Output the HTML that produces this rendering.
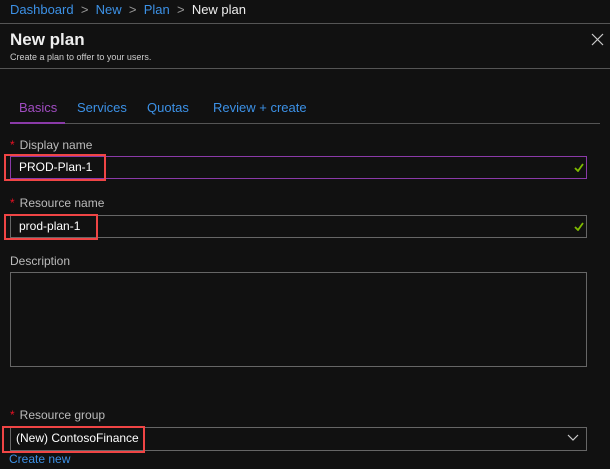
<!DOCTYPE html><html><head><style>
body{margin:0;width:610px;height:469px;background:#111;overflow:hidden;font-family:"Liberation Sans",sans-serif;position:relative;color:#ddd}
.a{position:absolute;white-space:nowrap}
.lbl{font-size:12px;color:#bbb}
.star{color:#e81123;margin-right:5px}
.in{position:absolute;left:10px;width:577px;border:1px solid #666;box-sizing:border-box;background:#111}
.red{position:absolute;border:2px solid #f04545;box-sizing:border-box}
</style></head><body>
<div class="a" style="left:10px;top:2px;font-size:13px;color:#3c91e6">Dashboard <span style="color:#999">&nbsp;&gt;&nbsp;</span> New <span style="color:#999">&nbsp;&gt;&nbsp;</span> Plan <span style="color:#999">&nbsp;&gt;&nbsp;</span> <span style="color:#eee">New plan</span></div>
<div class="a" style="left:0;top:23px;width:610px;height:1px;background:#555"></div>
<div class="a" style="left:10px;top:30px;font-size:17px;font-weight:bold;color:#eee">New plan</div>
<div class="a" style="left:10px;top:52px;font-size:9px;color:#ccc">Create a plan to offer to your users.</div>
<svg class="a" style="left:591px;top:33px" width="13" height="13"><path d="M1 1L12 12M12 1L1 12" stroke="#ccc" stroke-width="1.2"/></svg>
<div class="a" style="left:0;top:68px;width:610px;height:1px;background:#555"></div>
<div class="a" style="left:19px;top:100px;font-size:13px;color:#a04cc0">Basics</div>
<div class="a" style="left:77px;top:100px;font-size:13px;color:#3c91e6">Services</div>
<div class="a" style="left:147px;top:100px;font-size:13px;color:#3c91e6">Quotas</div>
<div class="a" style="left:213px;top:100px;font-size:13px;color:#3c91e6">Review + create</div>
<div class="a" style="left:10px;top:123px;width:590px;height:1px;background:#555"></div>
<div class="a" style="left:10px;top:122px;width:55px;height:2px;background:#8a3aa8"></div>
<div class="a lbl" style="left:10px;top:138px"><span class="star">*</span>Display name</div>
<div class="in" style="top:156px;height:23px;border-color:#8a3aa8"></div>
<svg class="a" style="left:574px;top:163px" width="10" height="9"><path d="M1 5L4 8L9 1" stroke="#7fba00" fill="none" stroke-width="1.8"/></svg>
<div class="a" style="left:19px;top:160px;font-size:12px;color:#fff">PROD-Plan-1</div>
<div class="red" style="left:4px;top:154px;width:102px;height:27px"></div>
<div class="a lbl" style="left:10px;top:196px"><span class="star">*</span>Resource name</div>
<div class="in" style="top:215px;height:23px"></div>
<svg class="a" style="left:574px;top:222px" width="10" height="9"><path d="M1 5L4 8L9 1" stroke="#7fba00" fill="none" stroke-width="1.8"/></svg>
<div class="a" style="left:19px;top:219px;font-size:12px;color:#fff">prod-plan-1</div>
<div class="red" style="left:4px;top:214px;width:94px;height:26px"></div>
<div class="a lbl" style="left:10px;top:254px">Description</div>
<div class="in" style="top:272px;height:95px"></div>
<div class="a lbl" style="left:10px;top:408px"><span class="star">*</span>Resource group</div>
<div class="in" style="top:427px;height:24px"></div>
<svg class="a" style="left:567px;top:434px" width="12" height="8"><path d="M1 1L6 6L11 1" stroke="#ccc" fill="none" stroke-width="1.2"/></svg>
<div class="a" style="left:16px;top:431px;font-size:12px;color:#fff">(New) ContosoFinance</div>
<div class="red" style="left:2px;top:426px;width:143px;height:27px"></div>
<div class="a" style="left:9px;top:452px;font-size:12px;color:#3c91e6">Create new</div>
</body></html>
